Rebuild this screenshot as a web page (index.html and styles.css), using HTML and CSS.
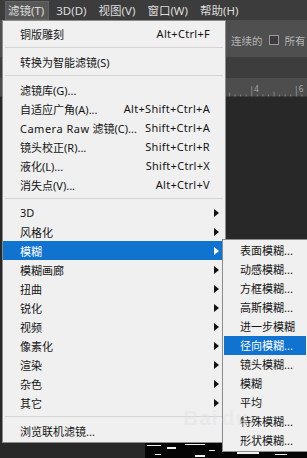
FILE: index.html
```html
<!DOCTYPE html>
<html lang="zh">
<head>
<meta charset="utf-8">
<link rel="stylesheet" href="styles.css">
</head>
<body>
<div class="app">
  <div class="menubar">
    <span class="mb-item active">滤镜(T)</span>
    <span class="mb-item">3D(D)</span>
    <span class="mb-item">视图(V)</span>
    <span class="mb-item">窗口(W)</span>
    <span class="mb-item">帮助(H)</span>
  </div>
  <div class="workspace">
    <div class="optbar"><span>连续的</span><span class="chk"></span><span>所有</span></div>
    <div class="tabbar"></div>
    <div class="ruler">
      <svg class="ticks" width="84" height="19" viewBox="0 0 84 19">
        <g stroke="#8a8a8a" stroke-width="1">
          <line x1="0.5" y1="15" x2="0.5" y2="19"/>
          <line x1="6.5" y1="17" x2="6.5" y2="19"/>
          <line x1="12.5" y1="17" x2="12.5" y2="19"/>
          <line x1="18.5" y1="17" x2="18.5" y2="19"/>
          <line x1="24.5" y1="8" x2="24.5" y2="19"/>
          <line x1="30.5" y1="17" x2="30.5" y2="19"/>
          <line x1="36.5" y1="17" x2="36.5" y2="19"/>
          <line x1="42.5" y1="17" x2="42.5" y2="19"/>
          <line x1="48.5" y1="14" x2="48.5" y2="19"/>
          <line x1="54.5" y1="17" x2="54.5" y2="19"/>
          <line x1="60.5" y1="17" x2="60.5" y2="19"/>
          <line x1="66.5" y1="17" x2="66.5" y2="19"/>
          <line x1="72.5" y1="8" x2="72.5" y2="19"/>
          <line x1="78.5" y1="17" x2="78.5" y2="19"/>
        </g>
        <text x="27" y="14" class="rnum">4</text>
        <text x="75" y="14" class="rnum">6</text>
      </svg>
    </div>
    <div class="canvas">
      <div class="photo">
        <svg width="162" height="16" viewBox="0 0 162 16">
          <rect width="162" height="16" fill="#050505"/>
          <g fill="#f2f2f2">
            <rect x="2" y="3" width="14" height="1"/>
            <rect x="22" y="5" width="9" height="2"/>
            <rect x="40" y="2" width="20" height="1"/>
            <rect x="64" y="8" width="6" height="1"/>
            <rect x="78" y="4" width="3" height="2"/>
            <rect x="92" y="10" width="22" height="2"/>
            <rect x="120" y="6" width="4" height="1"/>
            <rect x="130" y="12" width="12" height="1"/>
            <rect x="148" y="9" width="8" height="1"/>
            <rect x="10" y="12" width="6" height="1"/>
            <rect x="50" y="13" width="10" height="2"/>
          </g>
        </svg>
      </div>
    </div>
  </div>

  <div class="menu">
    <div class="row"><span class="lbl">铜版雕刻</span><span class="key">Alt+Ctrl+F</span></div>
    <div class="sep"></div>
    <div class="row"><span class="lbl">转换为智能滤镜(S)</span></div>
    <div class="sep"></div>
    <div class="row"><span class="lbl">滤镜库(G)...</span></div>
    <div class="row"><span class="lbl">自适应广角(A)...</span><span class="key">Alt+Shift+Ctrl+A</span></div>
    <div class="row"><span class="lbl"><span class="cr">Camera Raw</span> 滤镜(C)...</span><span class="key">Shift+Ctrl+A</span></div>
    <div class="row"><span class="lbl">镜头校正(R)...</span><span class="key">Shift+Ctrl+R</span></div>
    <div class="row"><span class="lbl">液化(L)...</span><span class="key">Shift+Ctrl+X</span></div>
    <div class="row"><span class="lbl">消失点(V)...</span><span class="key">Alt+Ctrl+V</span></div>
    <div class="sep"></div>
    <div class="row"><span class="lbl">3D</span><span class="arrow"></span></div>
    <div class="row"><span class="lbl">风格化</span><span class="arrow"></span></div>
    <div class="row hl"><span class="lbl">模糊</span><span class="arrow"></span></div>
    <div class="row"><span class="lbl">模糊画廊</span><span class="arrow"></span></div>
    <div class="row"><span class="lbl">扭曲</span><span class="arrow"></span></div>
    <div class="row"><span class="lbl">锐化</span><span class="arrow"></span></div>
    <div class="row"><span class="lbl">视频</span><span class="arrow"></span></div>
    <div class="row"><span class="lbl">像素化</span><span class="arrow"></span></div>
    <div class="row"><span class="lbl">渲染</span><span class="arrow"></span></div>
    <div class="row"><span class="lbl">杂色</span><span class="arrow"></span></div>
    <div class="row"><span class="lbl">其它</span><span class="arrow"></span></div>
    <div class="sep"></div>
    <div class="row"><span class="lbl">浏览联机滤镜...</span></div>
  </div>

  <div class="submenu">
    <div class="srow">表面模糊...</div>
    <div class="srow">动感模糊...</div>
    <div class="srow">方框模糊...</div>
    <div class="srow">高斯模糊...</div>
    <div class="srow">进一步模糊</div>
    <div class="srow hl">径向模糊...</div>
    <div class="srow">镜头模糊...</div>
    <div class="srow">模糊</div>
    <div class="srow">平均</div>
    <div class="srow">特殊模糊...</div>
    <div class="srow">形状模糊...</div>
  </div>

  <div class="watermark">Bai<span class="du">du</span></div>
</div>
</body>
</html>
```

FILE: styles.css
```css
* { box-sizing: border-box; }
html, body { margin: 0; padding: 0; }
body {
  width: 307px;
  height: 458px;
  overflow: hidden;
  background: #2a2a2a;
  font-family: "Noto Sans", "Noto Sans CJK SC", sans-serif;
  font-size: 11px;
}
.app {
  position: relative;
  width: 307px;
  height: 458px;
  display: flex;
  flex-direction: column;
}
.menubar {
  height: 20px;
  flex: none;
  background: #3c3c3c;
  display: flex;
  align-items: center;
  padding-left: 6px;
  gap: 6px;
  color: #dcdcdc;
  font-family: "Noto Sans", "Noto Sans CJK SC", sans-serif;
  font-size: 11.5px;
}
.mb-item {
  height: 17px;
  line-height: 17px;
  padding: 0 4px 0 2px;
  white-space: nowrap;
}
.mb-item.active {
  background: #575757;
  outline: 1px solid #626262;
}
.workspace {
  flex: 1;
  display: flex;
  flex-direction: column;
}
.optbar {
  height: 38px;
  flex: none;
  background: #4f4f4f;
  border-bottom: 1px solid #404040;
  display: flex;
  align-items: center;
  gap: 6px;
  padding-left: 231px;
  padding-top: 3px;
  color: #b4b4b4;
  font-family: "Noto Sans CJK SC", sans-serif;
  font-size: 10.5px;
  white-space: nowrap;
  overflow: hidden;
}
.chk {
  width: 10px;
  height: 10px;
  flex: none;
  border: 1px solid #9a9a9a;
  background: #3c3c3c;
}
.tabbar {
  height: 20px;
  flex: none;
  background: #3d3d3d;
}
.ruler {
  height: 19px;
  flex: none;
  background: #4d4d4d;
  border-bottom: 1px solid #3a3a3a;
  padding-left: 229px;
  display: flex;
}
.rnum {
  font-family: "Noto Sans", sans-serif;
  font-size: 9px;
  fill: #a8a8a8;
}
.canvas {
  flex: 1;
  background: #282828;
  display: flex;
  flex-direction: column;
  justify-content: flex-end;
}
.photo {
  height: 16px;
  margin-left: 145px;
  display: flex;
}
.menu {
  position: absolute;
  left: 2px;
  top: 20px;
  width: 224px;
  background: #f0f0f0;
  border: 1px solid #8c8c8c;
  padding: 3px 0 2px;
  color: #141414;
  font-family: "Noto Sans", "Noto Sans CJK SC", sans-serif;
  font-size: 11px;
}
.row {
  height: 19px;
  display: flex;
  align-items: center;
  padding: 0 5px 0 17px;
  white-space: nowrap;
}
.lbl { flex: 1; }
.cr { letter-spacing: 0.5px; }
.key { margin-right: 10px; letter-spacing: 0.3px; }
.arrow {
  width: 0;
  height: 0;
  border-top: 4px solid transparent;
  border-bottom: 4px solid transparent;
  border-left: 5px solid #111;
  margin-right: 1px;
}
.row.hl {
  background: #0f73cf;
  color: #fff;
}
.row.hl .arrow { border-left-color: #fff; }
.sep {
  height: 9px;
  display: flex;
  align-items: center;
  padding: 0 2px;
}
.sep::before {
  content: "";
  flex: 1;
  height: 1px;
  background: #d4d4d4;
}
.submenu {
  position: absolute;
  left: 222px;
  top: 239px;
  width: 85px;
  background: #f0f0f0;
  border: 1px solid #8c8c8c;
  border-right: none;
  padding: 1px 0;
  color: #141414;
  font-family: "Noto Sans", "Noto Sans CJK SC", sans-serif;
  font-size: 11px;
}
.srow {
  height: 19px;
  line-height: 19px;
  margin: 0 1px;
  padding-left: 16px;
  white-space: nowrap;
}
.srow.hl {
  background: #0f73cf;
  color: #fff;
}
.watermark {
  position: absolute;
  left: 183px;
  top: 407px;
  font-family: "Liberation Sans", sans-serif;
  font-weight: bold;
  font-size: 21px;
  color: rgba(225, 225, 225, 0.45);
  letter-spacing: 1px;
  line-height: 22px;
}
.watermark .du { margin-left: 3px; }
```
